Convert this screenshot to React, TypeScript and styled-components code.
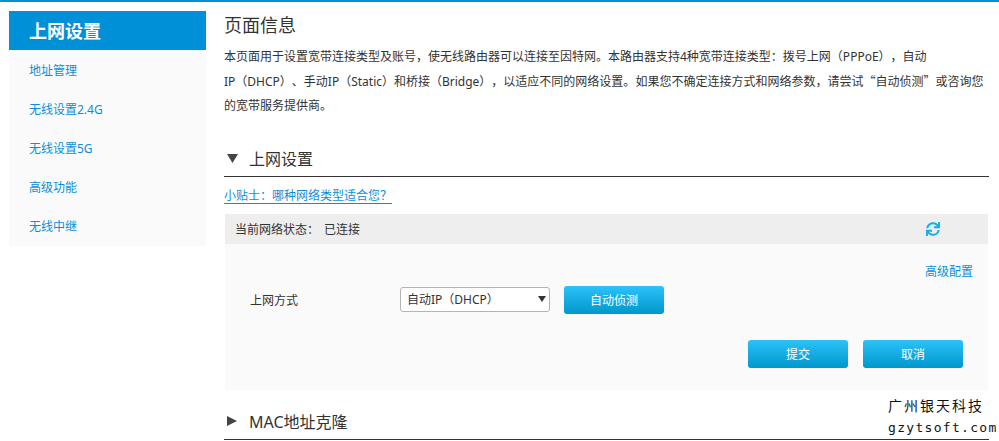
import React from 'react'
import styled, { createGlobalStyle } from 'styled-components'
import { FaSync } from 'react-icons/fa'

const cjk = `"Noto Sans", "Noto Sans CJK SC", sans-serif`

const GlobalStyle = createGlobalStyle`
  html, body {
    margin: 0;
    padding: 0;
    background: #fff;
    overflow: hidden;
  }
  body {
    font-family: ${cjk};
    font-size: 12px;
    color: #333;
    text-spacing-trim: space-all;
  }
`

const Page = styled.div`
  position: relative;
  width: 999px;
  height: 441px;
  box-sizing: border-box;
  border-top: 2px solid #0090d7;
  display: flex;
  align-items: flex-start;
  padding: 9px 0 0 9px;
  overflow: hidden;
`

const Sidebar = styled.div`
  width: 197px;
  background: #fafafa;
  padding-bottom: 1px;
`

const SideHead = styled.div`
  height: 39px;
  line-height: 41px;
  padding-left: 20px;
  background: #0090d7;
  color: #fff;
  font-size: 18px;
  font-weight: 700;
`

const SideItem = styled.a`
  display: block;
  height: 39px;
  line-height: 41px;
  padding-left: 20px;
  color: #0a8fd8;
  font-size: 12px;
`

const Main = styled.div`
  width: 765px;
  margin-left: 18px;
  margin-top: -9px;
  padding-top: 11px;
`

const Title = styled.h1`
  margin: 0;
  font-size: 18px;
  line-height: 24px;
  font-weight: 400;
  color: #333;
`

const Intro = styled.div`
  margin-top: 8px;
  font-size: 12px;
  line-height: 24.5px;
  color: #333;
  white-space: nowrap;
`

const Quote = styled.span`
  font-family: "Noto Sans CJK SC", sans-serif;
  line-height: 0;
`

const SectionHead = styled.div<{ $first?: boolean }>`
  display: flex;
  align-items: center;
  height: 35px;
  margin-top: ${({ $first }) => ($first ? '22px' : '14px')};
  border-bottom: 1px solid #333;
  font-size: 16px;
  color: #333;
`

const Arrow = styled.span`
  width: 25px;
  padding-left: 3px;
  box-sizing: border-box;
  display: flex;
  align-items: center;
  flex: none;
`

const TipRow = styled.div`
  margin-top: 10px;
  height: 27px;
`

const Tip = styled.a`
  display: inline-block;
  line-height: 15px;
  color: #0a8fd8;
  border-bottom: 1px solid #0a8fd8;
  font-size: 12px;
`

const StatusBar = styled.div`
  margin: 0 1px;
  height: 30px;
  background: #eeeeee;
  display: flex;
  align-items: center;
  justify-content: space-between;
  padding: 0 48px 0 10px;
  color: #333;
`

const StatusText = styled.span`
  display: flex;
  gap: 5px;
`

const RefreshIcon = styled(FaSync)`
  width: 14px;
  height: 14px;
  color: #14aeea;
`

const Panel = styled.div`
  margin: 0 1px;
  height: 146px;
  background: #fafafa;
  box-sizing: border-box;
  padding: 20px 15px 0 25px;
`

const AdvancedRow = styled.div`
  display: flex;
  justify-content: flex-end;
  line-height: 16px;
  height: 22px;
`

const Advanced = styled.a`
  color: #0a8fd8;
`

const FormRow = styled.div`
  display: flex;
  align-items: center;
`

const Label = styled.div`
  width: 150px;
  color: #333;
`

const SelectBox = styled.div`
  position: relative;
  width: 150px;
  height: 25px;
  margin-right: 14px;
`

const Select = styled.select`
  appearance: none;
  width: 100%;
  height: 100%;
  box-sizing: border-box;
  border: 1px solid #b4b4b4;
  border-radius: 3px;
  background: #fff;
  padding: 0 0 0 6px;
  font-family: ${cjk};
  font-size: 12px;
  color: #333;
  outline: none;
`

const SelectArrow = styled.span`
  position: absolute;
  right: 4px;
  top: 9px;
  width: 0;
  height: 0;
  border-left: 4px solid transparent;
  border-right: 4px solid transparent;
  border-top: 6px solid #333;
  pointer-events: none;
`

const Button = styled.button`
  width: 100px;
  height: 28px;
  padding: 0;
  border: none;
  border-radius: 3px;
  background: linear-gradient(#2cc2fa, #0097cb);
  color: #fff;
  font-family: ${cjk};
  font-size: 12px;
`

const Actions = styled.div`
  display: flex;
  justify-content: flex-end;
  gap: 15px;
  margin-top: 26px;
  padding-right: 10px;
`

const Watermark = styled.div`
  position: absolute;
  left: 888px;
  top: 393px;
  width: 100px;
  color: #111;
  font-size: 14px;
  line-height: 21px;
`

const MarkName = styled.div`
  letter-spacing: 2px;
  white-space: nowrap;
  font-family: "Noto Sans CJK SC", sans-serif;
`

const MarkSite = styled.div`
  margin-top: 1px;
  letter-spacing: 1.3px;
  white-space: nowrap;
  font-family: "DejaVu Sans Mono", monospace;
  font-size: 13px;
`

const Down = () => (
  <svg width="11" height="9" viewBox="0 0 11 9">
    <path d="M0 0h11L5.5 9z" fill="#444" />
  </svg>
)

const Right = () => (
  <svg width="10" height="10" viewBox="0 0 10 10">
    <path d="M0 0l10 5L0 10z" fill="#444" />
  </svg>
)

const sideItems = ['地址管理', '无线设置2.4G', '无线设置5G', '高级功能', '无线中继']

export default function App() {
  return (
    <>
      <GlobalStyle />
      <Page>
        <Sidebar>
          <SideHead>上网设置</SideHead>
          {sideItems.map(item => (
            <SideItem key={item}>{item}</SideItem>
          ))}
        </Sidebar>
        <Main>
          <Title>页面信息</Title>
          <Intro>
            本页面用于设置宽带连接类型及账号，使无线路由器可以连接至因特网。本路由器支持4种宽带连接类型：拨号上网（PPPoE），自动
            <br />
            IP（DHCP）、手动IP（Static）和桥接（Bridge），以适应不同的网络设置。如果您不确定连接方式和网络参数，请尝试<Quote>“</Quote>自动侦测<Quote>”</Quote>或咨询您
            <br />
            的宽带服务提供商。
          </Intro>
          <SectionHead $first>
            <Arrow><Down /></Arrow>
            上网设置
          </SectionHead>
          <TipRow>
            <Tip>小贴士：哪种网络类型适合您？</Tip>
          </TipRow>
          <StatusBar>
            <StatusText>
              <span>当前网络状态：</span>
              <span>已连接</span>
            </StatusText>
            <RefreshIcon />
          </StatusBar>
          <Panel>
            <AdvancedRow>
              <Advanced>高级配置</Advanced>
            </AdvancedRow>
            <FormRow>
              <Label>上网方式</Label>
              <SelectBox>
                <Select defaultValue="dhcp">
                  <option value="dhcp">自动IP（DHCP）</option>
                </Select>
                <SelectArrow />
              </SelectBox>
              <Button>自动侦测</Button>
            </FormRow>
            <Actions>
              <Button>提交</Button>
              <Button>取消</Button>
            </Actions>
          </Panel>
          <SectionHead>
            <Arrow><Right /></Arrow>
            MAC地址克隆
          </SectionHead>
        </Main>
        <Watermark>
          <MarkName>广州银天科技</MarkName>
          <MarkSite>gzytsoft.com</MarkSite>
        </Watermark>
      </Page>
    </>
  )
}
